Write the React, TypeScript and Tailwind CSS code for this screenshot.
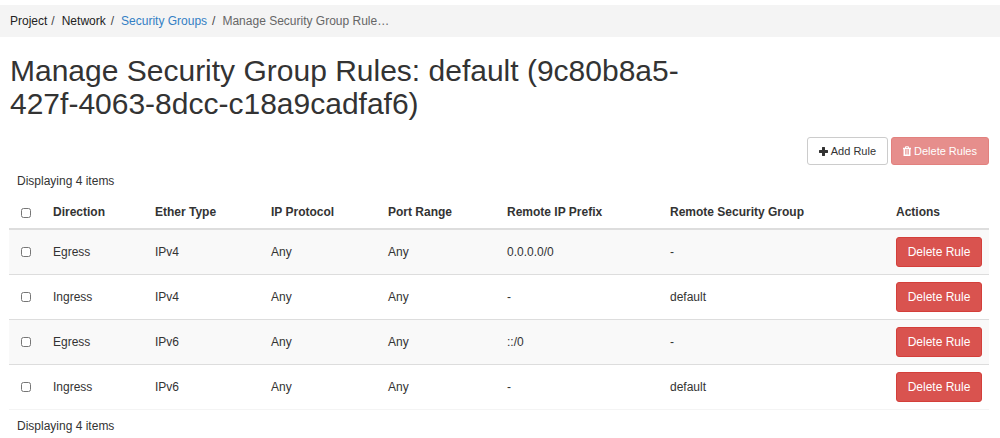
import { useState } from "react";

type Rule = {
  id: number;
  direction: string;
  etherType: string;
  protocol: string;
  ports: string;
  prefix: string;
  group: string;
};

const rules: Rule[] = [
  { id: 1, direction: "Egress", etherType: "IPv4", protocol: "Any", ports: "Any", prefix: "0.0.0.0/0", group: "-" },
  { id: 2, direction: "Ingress", etherType: "IPv4", protocol: "Any", ports: "Any", prefix: "-", group: "default" },
  { id: 3, direction: "Egress", etherType: "IPv6", protocol: "Any", ports: "Any", prefix: "::/0", group: "-" },
  { id: 4, direction: "Ingress", etherType: "IPv6", protocol: "Any", ports: "Any", prefix: "-", group: "default" },
];

const headings = [
  "Direction",
  "Ether Type",
  "IP Protocol",
  "Port Range",
  "Remote IP Prefix",
  "Remote Security Group",
  "Actions",
];

function PlusIcon() {
  return (
    <svg viewBox="0 0 9 9" className="size-[9px]" fill="currentColor" aria-hidden="true">
      <path d="M3 0.4Q3 0 3.4 0H5.6Q6 0 6 0.4V3H8.6Q9 3 9 3.4V5.6Q9 6 8.6 6H6V8.6Q6 9 5.6 9H3.4Q3 9 3 8.6V6H0.4Q0 6 0 5.6V3.4Q0 3 0.4 3H3Z" />
    </svg>
  );
}

function TrashIcon() {
  return (
    <svg viewBox="0 0 16 20" className="h-[10px] w-[8px]" fill="none" stroke="currentColor" aria-hidden="true">
      <path d="M5 4V1.5h6V4" strokeWidth="2" />
      <path d="M0 5h16" strokeWidth="3" />
      <path d="M2.5 6v12.5h11V6" strokeWidth="3" />
      <path d="M6.3 7v11M9.7 7v11" strokeWidth="1.6" />
    </svg>
  );
}

function Separator() {
  return (
    <span aria-hidden="true" className="pr-[7px] text-[#444]">
      /
    </span>
  );
}

function Check({ label, checked, onChange }: { label: string; checked: boolean; onChange: () => void }) {
  return (
    <input
      type="checkbox"
      aria-label={label}
      checked={checked}
      onChange={onChange}
      className="ml-[5px] block size-[10px]"
    />
  );
}

export default function App() {
  const [selected, setSelected] = useState<number[]>([]);
  const allSelected = selected.length === rules.length;
  const toggle = (id: number) =>
    setSelected((now) => (now.includes(id) ? now.filter((item) => item !== id) : [...now, id]));

  return (
    <div className="bg-white pt-[5px] font-['Liberation_Sans',Arial,sans-serif] text-[12px] leading-[17px] text-[#333]">
      <nav aria-label="Breadcrumb" className="bg-[#f4f4f4] py-2 pr-[10px] pl-[10px]">
        <ol className="flex h-4 items-center">
          <li className="text-[#222]">Project</li>
          <li className="flex pl-[4px] text-[#222]">
            <Separator />
            Network
          </li>
          <li className="flex pl-[5px]">
            <Separator />
            <a href="#groups" className="text-[#337fc4]">
              Security Groups
            </a>
          </li>
          <li className="flex pl-[5px] text-[#666]" aria-current="page">
            <Separator />
            Manage Security Group Rule…
          </li>
        </ol>
      </nav>

      <main className="pr-[11px] pl-[9px]">
        <h1 className="w-3/4 pt-[17px] pl-px text-[30px] leading-[33px]">
          Manage Security Group Rules: default (9c80b8a5-427f-4063-8dcc-c18a9cadfaf6)
        </h1>

        <div className="mt-[17px] flex justify-end gap-[3px] text-[11px]">
          <button
            type="button"
            className="flex h-7 items-center gap-[3px] rounded-[3px] border border-[#ccc] bg-white px-[11px]"
          >
            <PlusIcon />
            Add Rule
          </button>
          <button
            type="button"
            disabled={selected.length === 0}
            className="flex h-7 items-center gap-[3px] rounded-[3px] border border-[#d43f3a] bg-[#d9534f] px-[11px] text-white disabled:opacity-65"
          >
            <TrashIcon />
            Delete Rules
          </button>
        </div>

        <p className="mt-px px-2 py-[7px]">Displaying 4 items</p>
        <table className="w-full table-fixed border-separate border-spacing-0 text-left">
          <colgroup>
            <col className="w-[37px]" />
            <col className="w-[102px]" />
            <col className="w-[116px]" />
            <col className="w-[117px]" />
            <col className="w-[119px]" />
            <col className="w-[163px]" />
            <col className="w-[226px]" />
            <col className="w-[100px]" />
          </colgroup>
          <thead>
            <tr>
              <th className="border-b-2 border-[#ddd] p-[7px]">
                <Check
                  label="Select all rules"
                  checked={allSelected}
                  onChange={() => setSelected(allSelected ? [] : rules.map((rule) => rule.id))}
                />
              </th>
              {headings.map((heading) => (
                <th key={heading} scope="col" className="border-b-2 border-[#ddd] p-[7px] font-bold whitespace-nowrap">
                  {heading}
                </th>
              ))}
            </tr>
          </thead>
          <tbody className="[&_td]:border-b [&_td]:border-[#ddd] [&_td]:p-[7px] [&_tr:last-child_td]:border-[#f4f4f4] [&_tr:nth-child(odd)]:bg-[#f9f9f9]">
            {rules.map((rule) => (
              <tr key={rule.id}>
                <td>
                  <Check
                    label={`Select rule ${rule.id}`}
                    checked={selected.includes(rule.id)}
                    onChange={() => toggle(rule.id)}
                  />
                </td>
                <td>{rule.direction}</td>
                <td>{rule.etherType}</td>
                <td>{rule.protocol}</td>
                <td>{rule.ports}</td>
                <td>{rule.prefix}</td>
                <td>{rule.group}</td>
                <td>
                  <button
                    type="button"
                    className="block h-[30px] w-full rounded-[3px] border border-[#d43f3a] bg-[#d9534f] whitespace-nowrap text-white"
                  >
                    Delete Rule
                  </button>
                </td>
              </tr>
            ))}
          </tbody>
        </table>
        <p className="px-2 py-[8px]">Displaying 4 items</p>
      </main>
    </div>
  );
}
